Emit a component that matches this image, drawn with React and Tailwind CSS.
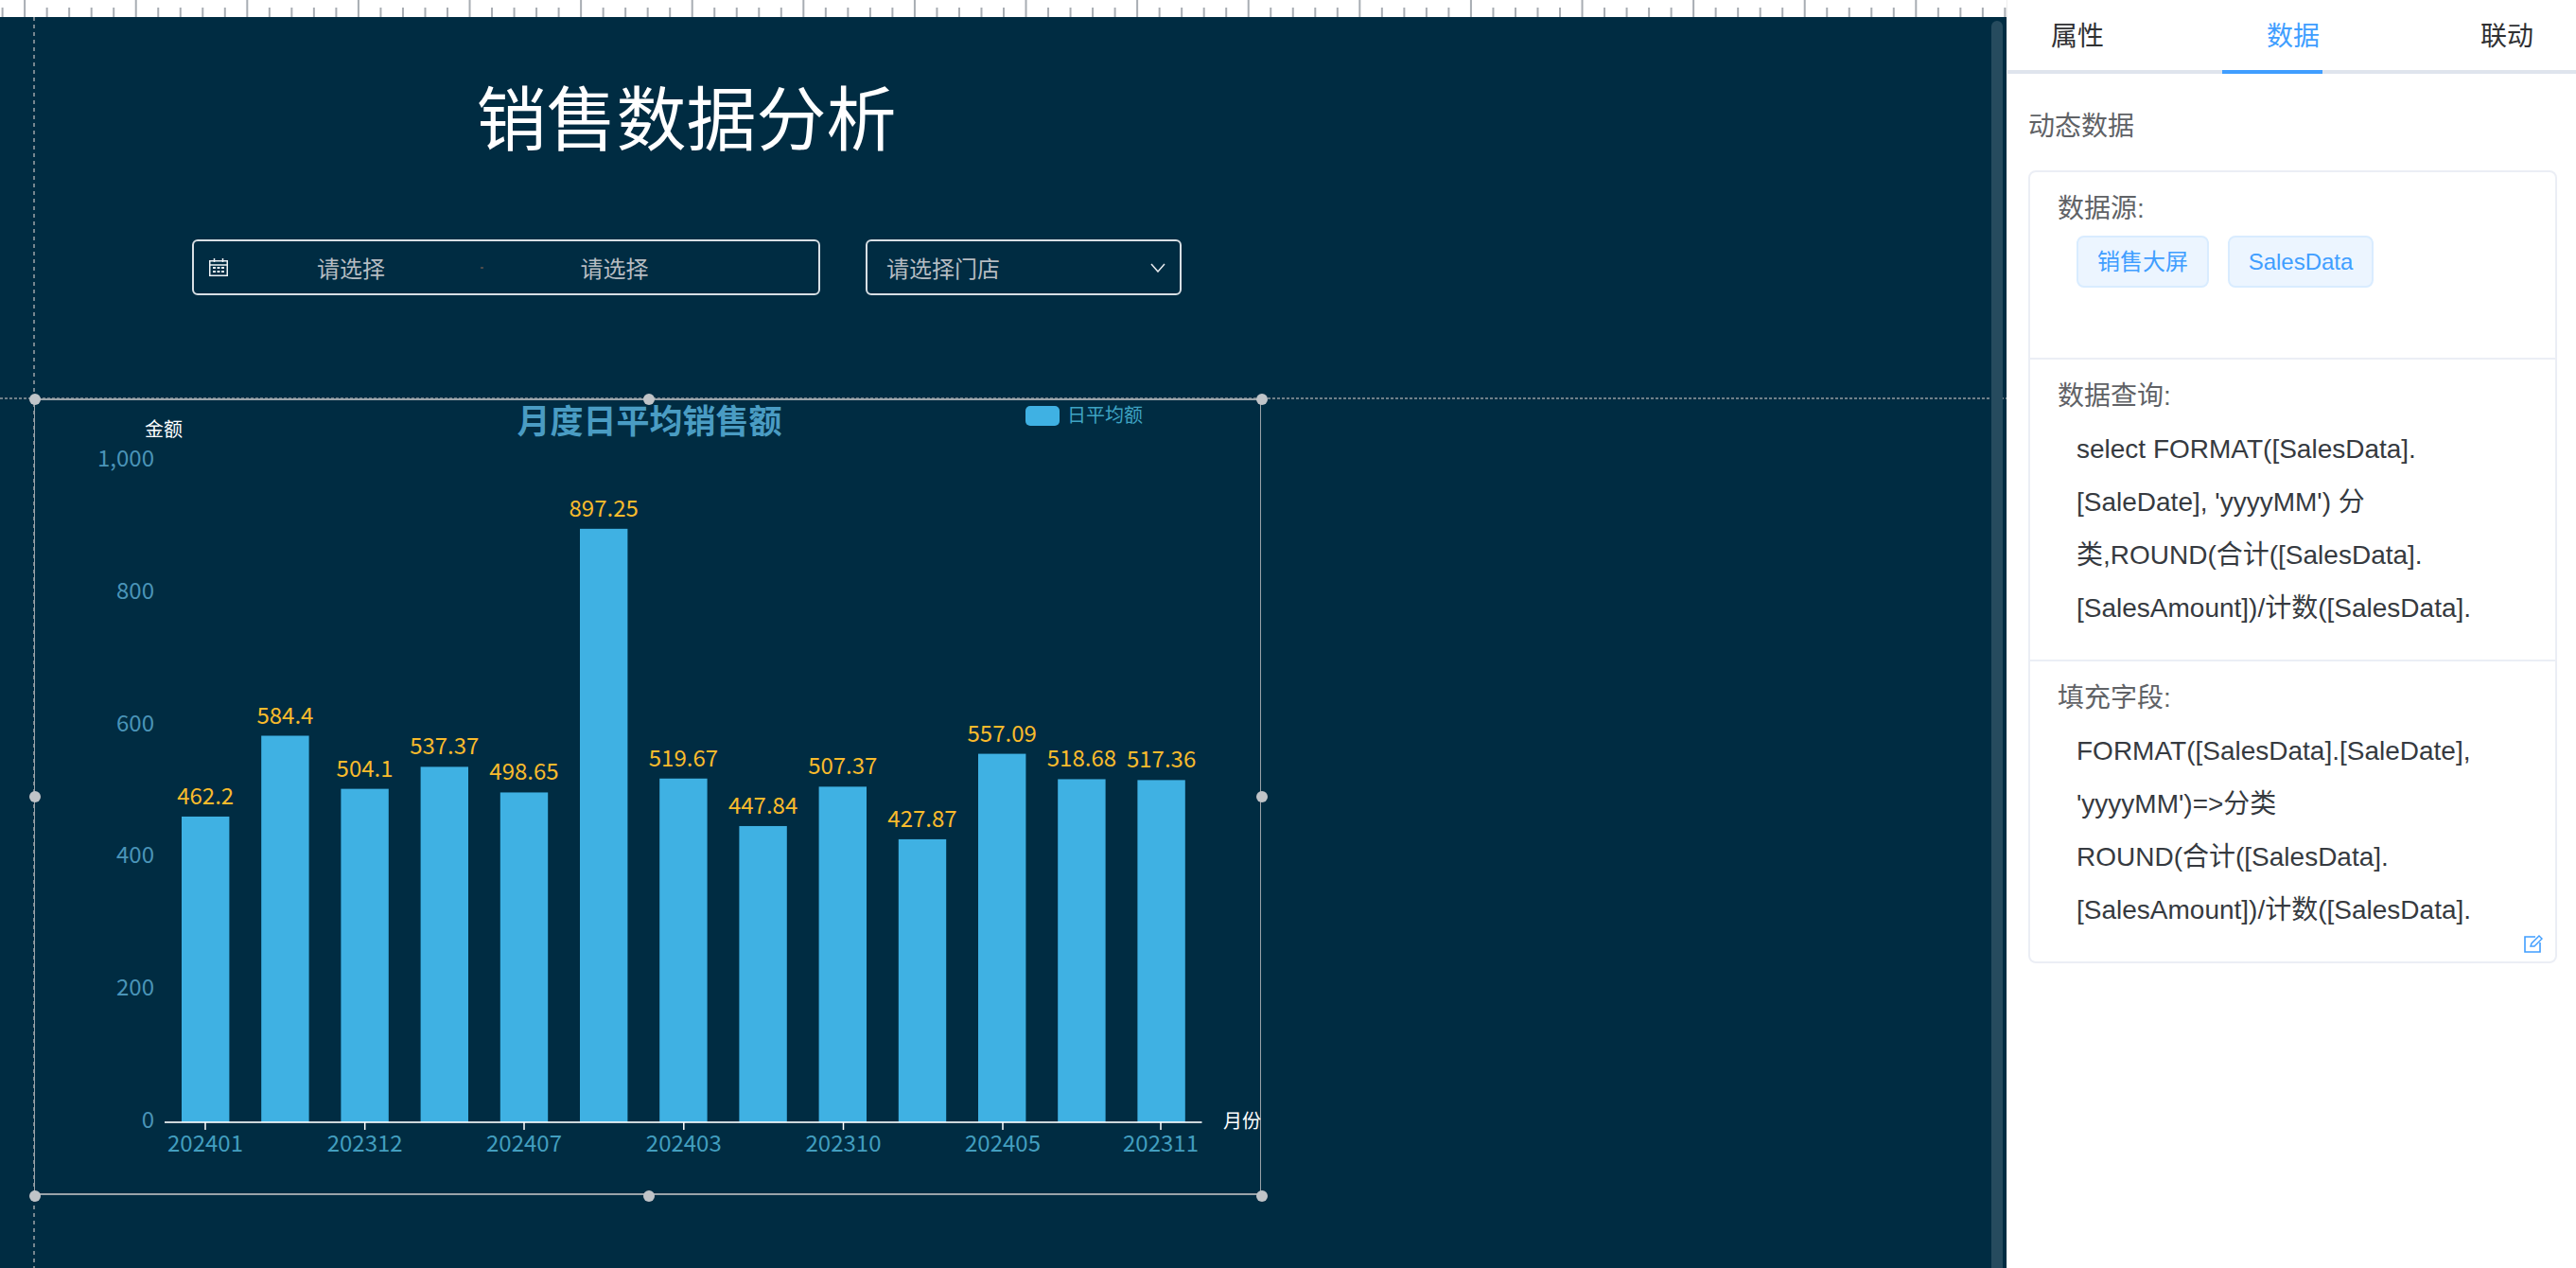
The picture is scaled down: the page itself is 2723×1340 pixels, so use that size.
import React from "react";

const BARS = [
  [462.2, "462.2"], [584.4, "584.4"], [504.1, "504.1"], [537.37, "537.37"], [498.65, "498.65"],
  [897.25, "897.25"], [519.67, "519.67"], [447.84, "447.84"], [507.37, "507.37"], [427.87, "427.87"],
  [557.09, "557.09"], [518.68, "518.68"], [517.36, "517.36"],
];
const XTICKS = [
  [217, "202401"], [385.7, "202312"], [554, "202407"], [722.8, "202403"],
  [891.5, "202310"], [1060, "202405"], [1227, "202311"],
];
const YTICKS = ["0", "200", "400", "600", "800", "1,000"];
const BASE = 1186;
const UNIT = 0.699;

function Ruler() {
  const ticks = [];
  for (let k = 0; k * 23.52 + 3 < 2121; k++) {
    const major = k % 5 === 1;
    const x = 2.6 + k * 23.52;
    ticks.push(<rect key={k} x={x - 1} y={major ? 0 : 8} width="2" height={major ? 18 : 10} fill="#a8adb3" />);
  }
  return (
    <svg className="block h-[18px] w-full flex-none bg-white" viewBox="0 0 2121 18">
      {ticks}
    </svg>
  );
}

function Chart() {
  return (
    <svg className="absolute inset-0 block h-full w-full overflow-visible" viewBox="37 423 1295 838">
      <text x="686.5" y="458" textAnchor="middle" fontSize="35" fontWeight="700" fill="#4a9cc3">月度日平均销售额</text>
      <rect x="1084" y="429" width="36" height="21" rx="5" fill="#3fb1e3" />
      <text x="1128" y="446" fontSize="20" fill="#3ea3c3">日平均额</text>
      <text x="153" y="461" fontSize="20" fill="#ffffff">金额</text>
      {YTICKS.map((t, i) => (
        <text key={t} x="163" y={1192 - i * 139.8} textAnchor="end" fontSize="24" fill="#4a94b8">{t}</text>
      ))}
      {BARS.map(([v, label], i) => {
        const cx = 217.2 + i * 84.2;
        const h = v * UNIT;
        return (
          <g key={label}>
            <rect x={cx - 25.2} y={BASE - h} width="50.4" height={h} fill="#3fb1e3" />
            <text x={cx} y={BASE - h - 13} textAnchor="middle" fontSize="24" fill="#f9bb2c">{label}</text>
          </g>
        );
      })}
      <rect x="174" y="1185.2" width="1096.5" height="1.6" fill="#ffffff" />
      {XTICKS.map(([x, label]) => (
        <g key={label}>
          <rect x={x - 0.75} y="1186" width="1.5" height="8" fill="#ffffff" />
          <text x={x} y="1217" textAnchor="middle" fontSize="24" fill="#429ebf">{label}</text>
        </g>
      ))}
      <text x="1293" y="1192" fontSize="20" fill="#ffffff">月份</text>
    </svg>
  );
}

function Handle({ className }) {
  return <div className={"absolute h-3 w-3 rounded-full bg-[#c0c4c8] " + className} />;
}

function Canvas() {
  return (
    <div className="relative min-h-0 flex-1 overflow-hidden bg-[#002c42] font-['Noto_Sans_CJK_SC','Liberation_Sans',sans-serif]">
      <div className="absolute left-[500px] top-[53px] w-[451px] text-center text-[74px] leading-[100px] text-white">销售数据分析</div>

      <div className="absolute left-[203px] top-[235px] flex h-[59px] w-[664px] items-center rounded-md border-2 border-[#d8dfe4] pl-4 text-2xl text-[#b6bcc2]">
        <svg className="h-[19px] w-5 flex-none" viewBox="0 0 20 19" fill="none" stroke="#eef2f5">
          <rect x="0.75" y="2.75" width="18.5" height="15.5" strokeWidth="1.5" />
          <path d="M1 7h18M5.5 0v4M14.5 0v4" strokeWidth="1.5" />
          <path d="M4 10h12M4 14h12" strokeWidth="2" strokeDasharray="3 1.5" />
        </svg>
        <div className="ml-[10px] w-[240px] text-center">请选择</div>
        <div className="flex w-[36px] justify-center">
          <div className="h-[2px] w-[3px] bg-[#4a4a4a]" />
        </div>
        <div className="w-[245px] text-center">请选择</div>
      </div>

      <div className="absolute left-[915px] top-[235px] flex h-[59px] w-[334px] items-center justify-between rounded-md border-2 border-[#d8dfe4] pl-[20px] pr-[15px] text-2xl text-[#b6bcc2]">
        <div>请选择门店</div>
        <svg className="h-[10px] w-4" viewBox="0 0 16 10" fill="none" stroke="#e8ecef" strokeWidth="1.5">
          <path d="M1 1l7 8 7-8" />
        </svg>
      </div>

      <div className="absolute bottom-0 left-[35px] top-0 w-[2px] bg-[repeating-linear-gradient(to_bottom,#76868f_0,#76868f_4px,transparent_4px,transparent_8px)]" />
      <div className="absolute left-0 right-0 top-[402px] h-[2px] bg-[repeating-linear-gradient(to_right,#6f8089_0,#6f8089_3px,transparent_3px,transparent_5px)]" />

      <div className="absolute right-1 top-1 bottom-0 w-3 rounded-t-full bg-[#264b5e]" />

      <div className="absolute left-[36px] top-[403px] h-[842px] w-[1297px] border-x border-y-2 border-[#9aa3a9]">
        <Chart />
        <Handle className="-left-[6px] -top-[7px]" />
        <Handle className="left-[643px] -top-[7px]" />
        <Handle className="-right-[8px] -top-[7px]" />
        <Handle className="-left-[6px] top-[413px]" />
        <Handle className="-right-[8px] top-[413px]" />
        <Handle className="-left-[6px] -bottom-[9px]" />
        <Handle className="left-[643px] -bottom-[9px]" />
        <Handle className="-right-[8px] -bottom-[9px]" />
      </div>
    </div>
  );
}

function Code({ lines }) {
  return (
    <div className="pl-[20px] text-[28px] leading-[56px] text-[#363a40]">
      {lines.map((l) => (
        <div key={l} className="whitespace-nowrap">{l}</div>
      ))}
    </div>
  );
}

function Panel() {
  return (
    <div className="flex w-[602px] flex-none flex-col border-l border-[#eeeeee] bg-white font-['Liberation_Sans','Noto_Sans_CJK_SC',sans-serif]">
      <div className="flex h-[74px] items-center pl-[46px] pt-[4px] text-[28px] text-[#303133]">
        <div>属性</div>
        <div className="ml-[172px] text-[#409eff]">数据</div>
        <div className="ml-[170px]">联动</div>
      </div>
      <div className="flex h-1 flex-none">
        <div className="w-[227px] bg-[#dfe4ed]" />
        <div className="w-[106px] bg-[#409eff]" />
        <div className="flex-1 bg-[#dfe4ed]" />
      </div>
      <div className="pl-[22px] pr-[20px]">
        <div className="mt-[36px] text-[28px] leading-[40px] text-[#606266]">动态数据</div>
        <div className="relative mt-[26px] h-[838px] rounded-lg border-2 border-[#ebeef5]">
          <div className="h-[198px] border-b-2 border-[#ebeef5] pl-[29px] pt-[19px]">
            <div className="text-[28px] leading-[40px] text-[#606266]">数据源:</div>
            <div className="ml-[20px] mt-[8px] flex gap-5 text-2xl text-[#409eff]">
              <div className="flex h-[55px] w-[140px] items-center justify-center rounded-lg border-2 border-[#d9ecff] bg-[#ecf5ff]">销售大屏</div>
              <div className="flex h-[55px] w-[154px] items-center justify-center rounded-lg border-2 border-[#d9ecff] bg-[#ecf5ff]">SalesData</div>
            </div>
          </div>
          <div className="h-[319px] border-b-2 border-[#ebeef5] pl-[29px] pt-[19px]">
            <div className="mb-2 text-[28px] leading-[40px] text-[#606266]">数据查询:</div>
            <Code lines={["select FORMAT([SalesData].", "[SaleDate], 'yyyyMM') 分", "类,ROUND(合计([SalesData].", "[SalesAmount])/计数([SalesData]."]} />
          </div>
          <div className="pl-[29px] pt-[19px]">
            <div className="mb-2 text-[28px] leading-[40px] text-[#606266]">填充字段:</div>
            <Code lines={["FORMAT([SalesData].[SaleDate],", "'yyyyMM')=>分类", "ROUND(合计([SalesData].", "[SalesAmount])/计数([SalesData]."]} />
          </div>
          <svg className="absolute bottom-[9px] right-[13px] h-[19px] w-5" viewBox="0 0 20 19" fill="none" stroke="#409eff">
            <path d="M12 2H1v16h16V8" strokeWidth="1.6" />
            <path d="M7 12l1-3 8-8 3 3-8 8z" strokeWidth="1.4" />
          </svg>
        </div>
      </div>
    </div>
  );
}

export default function App() {
  return (
    <div className="flex h-[1340px] w-[2723px] overflow-hidden bg-white">
      <div className="flex w-[2121px] flex-none flex-col">
        <Ruler />
        <Canvas />
      </div>
      <Panel />
    </div>
  );
}
